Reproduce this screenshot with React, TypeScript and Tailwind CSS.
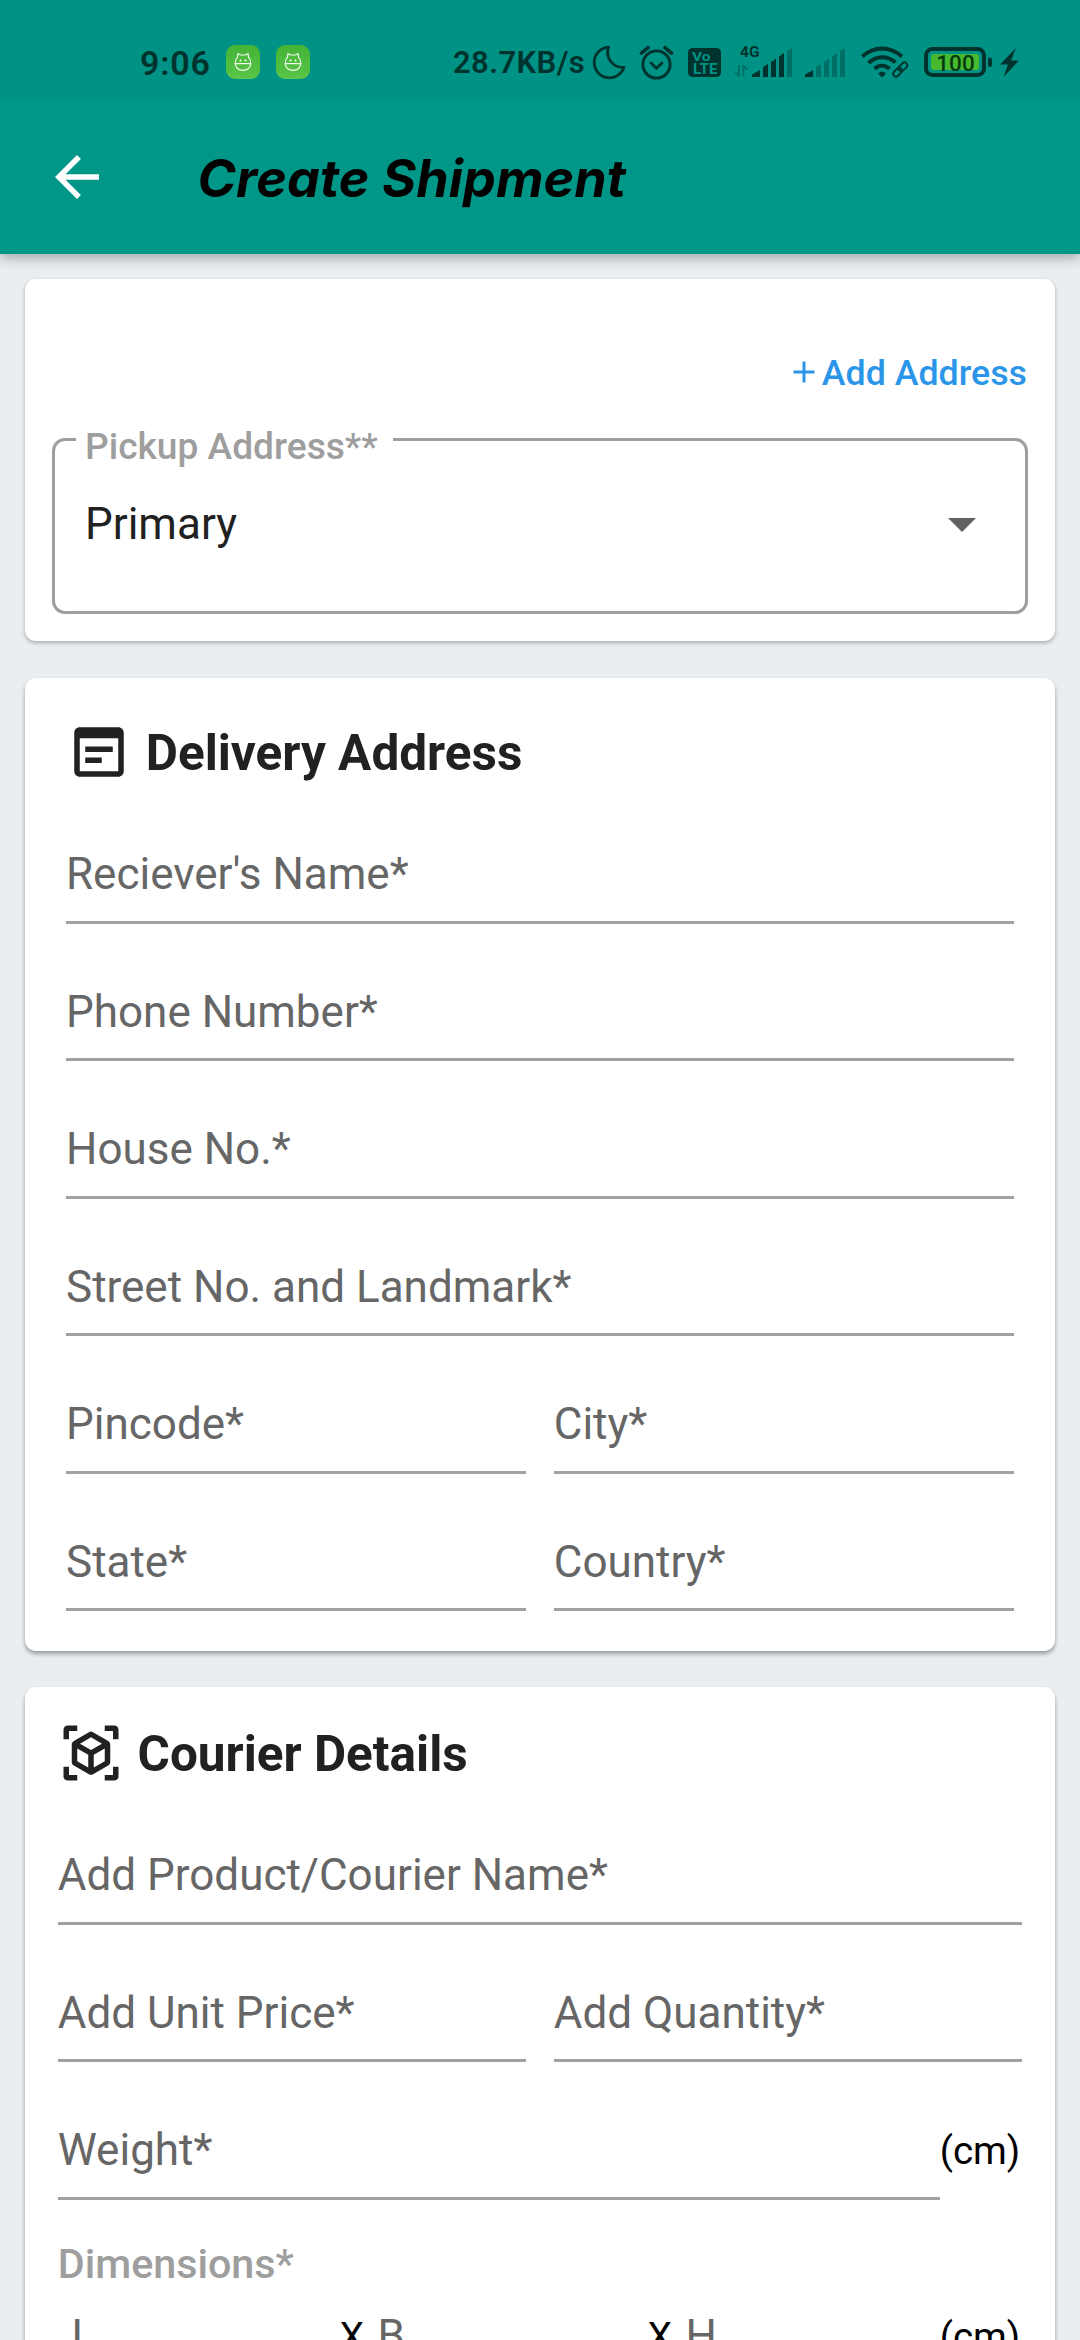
import type { ReactNode } from 'react';

const INK = '#00332d';
const FAINT = '#007066';

function AppBadge() {
  return (
    <div className="flex h-[34px] w-[34px] items-center justify-center rounded-[9px] bg-linear-to-b from-[#43b336] to-[#5ac548]">
      <svg width="18" height="20" viewBox="0 0 18 20" fill="none" stroke="#f1fbef" strokeWidth="1.2">
        <path d="M1.2 11.2C1.2 15.6 4.6 18.4 9 18.4s7.8-2.8 7.8-7.2c0-2.7-.8-4.7-2.3-6L14 1.6 11.6 3H6.4L4 1.6 3.5 5.2c-1.5 1.3-2.3 3.3-2.3 6z" />
        <path d="M1.2 11.7h15.6M5.5 8.6h2M10.5 8.6h2M6.5 7.6v2M11.5 7.6v2" />
      </svg>
    </div>
  );
}

function Moon() {
  return (
    <svg className="ml-2 h-[35px] w-[34px]" viewBox="0 0 34 35" fill="none" stroke={INK} strokeWidth="2.8" strokeLinejoin="round">
      <path d="M16.6 2.2A15.3 15.3 0 1 0 32 22.3 A15 15 0 0 1 16.6 2.2z" />
    </svg>
  );
}

function Alarm() {
  return (
    <svg className="ml-[13px] h-[35px] w-[35px]" viewBox="0 0 35 35" fill="none" stroke={INK} strokeWidth="2.9" strokeLinecap="round">
      <circle cx="17.5" cy="19.5" r="13.6" />
      <path d="M12 18l5.5 5.2L23 18" strokeLinejoin="round" />
      <path d="M2.4 8.2L9 2.6M32.6 8.2L26 2.6" strokeWidth="3.6" />
    </svg>
  );
}

function VoLte() {
  return (
    <svg className="ml-[14px] mt-[1px] h-[29px] w-[33px]" viewBox="0 0 33 29">
      <rect width="33" height="29" rx="4.5" fill={INK} />
      <g fill="#009285" fontFamily="Roboto, sans-serif" fontWeight="700">
        <text x="4" y="13" fontSize="13.5" textLength="18.5" lengthAdjust="spacingAndGlyphs">Vo</text>
        <text x="5" y="25.8" fontSize="14" textLength="24.5" lengthAdjust="spacingAndGlyphs">LTE</text>
      </g>
    </svg>
  );
}

const BAR_PATHS = ['M0 29v-2.5L8 22v7z', 'M11 29V19l5-3v13z', 'M19 29V14l5-3.3V29z', 'M27 29V8.500L32 5v24z', 'M35 29V3l5-3v29z'];

function Signal({ filled }: { filled: number }) {
  return (
    <>
      {BAR_PATHS.map((d, i) => (
        <path key={d} d={d} fill={i < filled ? INK : FAINT} />
      ))}
    </>
  );
}

function MobileSignal() {
  return (
    <svg className="ml-[13px] h-[34px] w-[58px] overflow-visible" viewBox="0 0 58 34">
      <text x="6" y="12.4" fontSize="15.5" fontWeight="700" fill={INK} fontFamily="Roboto, sans-serif" textLength="19.5" lengthAdjust="spacingAndGlyphs">4G</text>
      <path d="M5 20v11.5M5 31.5l-4-4.5M9.5 31.5V20M9.5 20.5l4 4.5" stroke={FAINT} strokeWidth="1.8" fill="none" />
      <g transform="translate(18 3)">
        <Signal filled={4} />
      </g>
    </svg>
  );
}

function SecondSignal() {
  return (
    <svg className="ml-[13px] h-[34px] w-[40px]" viewBox="0 0 40 34">
      <g transform="translate(0 3)">
        <Signal filled={1} />
      </g>
    </svg>
  );
}

function Wifi() {
  return (
    <svg className="ml-[16px] h-[32px] w-[48px]" viewBox="0 0 48 32" fill="none" stroke={INK}>
      <path d="M1.3 10.5C13-.2 29-.2 41 10.5" strokeWidth="4" />
      <path d="M7.5 17C16 9.5 26.5 9.5 34.5 16.5" strokeWidth="4" />
      <path d="M13.5 22.7c4.5-4 10.5-4 15 0" strokeWidth="4" />
      <path d="M17 27.5c2.5-2.3 5.5-2.3 8 0L21 31.5z" fill={INK} stroke="none" />
      <g strokeWidth="1.9" transform="rotate(-45 39.5 23.5)">
        <rect x="30.5" y="20.5" width="10" height="5.6" rx="2.8" />
        <rect x="38" y="20.5" width="10" height="5.6" rx="2.8" />
      </g>
    </svg>
  );
}

function Battery() {
  return (
    <svg className="ml-[15px] h-[30px] w-[68px]" viewBox="0 0 68 30">
      <rect x="2" y="2" width="58" height="26" rx="6.5" fill="none" stroke={INK} strokeWidth="4" />
      <rect x="7" y="7" width="48" height="16" rx="2.5" fill="#46b92e" />
      <rect x="64" y="10.5" width="4" height="9.5" rx="2" fill={INK} />
      <text x="31.5" y="23.5" fontSize="22.5" fontWeight="500" textAnchor="middle" fill="#063a12" fontFamily="Roboto, sans-serif">100</text>
    </svg>
  );
}

function Bolt() {
  return (
    <svg className="ml-2 h-[29px] w-[19px]" viewBox="0 0 19 29">
      <path d="M16 0L0 16.5h8L3.500 29 19 12.5h-8z" fill={INK} />
    </svg>
  );
}

function StatusBar() {
  return (
    <div className="flex h-[100px] items-start bg-[#009285] pt-[45px] text-[#00332d]">
      <div className="flex h-[34px] w-full items-center">
        <div className="ml-[140px] mt-[2px] w-[86px] text-[34px] font-semibold leading-[34px] tracking-[0.8px]">9:06</div>
        <AppBadge />
        <div className="w-4" />
        <AppBadge />
        <div className="ml-[143px] mt-[2px] w-[131px] whitespace-nowrap text-[31px] font-semibold leading-[36px] tracking-[0.4px]">28.7KB/s</div>
        <Moon />
        <Alarm />
        <VoLte />
        <MobileSignal />
        <SecondSignal />
        <Wifi />
        <Battery />
        <Bolt />
      </div>
    </div>
  );
}

function AppBar() {
  return (
    <header className="relative shadow-[0_4px_12px_rgba(0,0,0,0.3)]">
      <StatusBar />
      <div className="flex h-[154px] items-center bg-[#009688] pl-11">
        <svg className="h-[66px] w-[66px]" viewBox="0 0 24 24" fill="#fff">
          <path d="M20 11H7.83l5.59-5.59L12 4l-8 8 8 8 1.41-1.41L7.83 13H20v-2z" />
        </svg>
        <h1 className="ml-[87.5px] mt-[4px] font-['Inter'] text-[52px] font-bold italic leading-[64px] tracking-[0.15px] text-black">Create Shipment</h1>
      </div>
    </header>
  );
}

function Field({ label }: { label: string }) {
  return (
    <label className="flex h-[137.5px] min-w-0 flex-1 flex-col justify-end">
      <span className="h-[66px] whitespace-nowrap text-[44px] leading-[66px] text-[#666]">{label}</span>
      <span className="mt-[13.5px] h-[3px] bg-[#a2a2a2]" />
    </label>
  );
}

function FieldRow({ children }: { children: ReactNode }) {
  return <div className="flex gap-[27.5px]">{children}</div>;
}

function Heading({ icon, children }: { icon: string; children: ReactNode }) {
  return (
    <div className="mb-px flex h-[66px] items-center gap-[13.75px]">
      <svg className="h-[66px] w-[66px]" viewBox="0 0 24 24" fill="#212121">
        <path d={icon} />
      </svg>
      <h2 className="mt-[2px] text-[49.5px] font-bold leading-[66px] text-[#212121]">{children}</h2>
    </div>
  );
}

const DOCUMENT_ICON =
  'M19 3H5c-1.11 0-2 .9-2 2v14c0 1.1.89 2 2 2h14c1.1 0 2-.9 2-2V5c0-1.1-.89-2-2-2zm0 16H5V7h14v12zm-2-7H7v-2h10v2zm-4 4H7v-2h6v2z';
const BOX_ICON =
  'M18.25 7.6l-5.5-3.18c-.46-.27-1.04-.27-1.5 0L5.75 7.6C5.29 7.87 5 8.36 5 8.9v6.35c0 .54.29 1.03.75 1.3l5.5 3.18c.46.27 1.04.27 1.5 0l5.5-3.18c.46-.27.75-.76.75-1.3V8.9c0-.54-.29-1.03-.75-1.3zM7 14.96v-4.62l4 2.32v4.61l-4-2.31zM12 10.93L8 8.61l4-2.31 4 2.31-4 2.32zM13 17.27v-4.61l4-2.32v4.62l-4 2.31zM7 2H3.5C2.67 2 2 2.67 2 3.5V7h2V4h3V2zM17 2h3.5c.83 0 1.5.67 1.5 1.5V7h-2V4h-3V2zM7 22H3.5c-.83 0-1.5-.67-1.5-1.5V17h2v3h3v2zM17 22h3.5c.83 0 1.5-.67 1.5-1.5V17h-2v3h-3v2z';

function PickupCard() {
  return (
    <section className="mt-[25px] h-[362px] rounded-[11px] bg-white px-[27px] pt-[60px] shadow-[0_2px_4px_rgba(0,0,0,0.28)]">
      <div className="flex h-[66px] items-center justify-end text-[#2b95e9]">
        <svg className="mr-[7px] h-[22px] w-[22px]" viewBox="0 0 22 22" stroke="currentColor" strokeWidth="3">
          <path d="M0.5 11h21M11 .5v21" />
        </svg>
        <span className="mr-px mt-[2px] text-[35.75px] font-medium leading-[66px]">Add Address</span>
      </div>
      <div className="relative mt-[33px] flex h-[176px] items-center justify-between rounded-[13px] border-[3px] border-[#9e9e9e] pb-1 pl-[30px] pr-[49px]">
        <span className="absolute -top-[18px] left-[21px] h-[46px] w-[317px] bg-white pl-[9px] text-[37.125px] font-medium leading-[47px] text-[#9e9e9e]">Pickup Address**</span>
        <span className="text-[44px] leading-[66px] text-[#212121]">Primary</span>
        <svg className="mt-[2px] h-[14px] w-7" viewBox="0 0 28 14" fill="#616161">
          <path d="M0 0h28L14 14z" />
        </svg>
      </div>
    </section>
  );
}

function DeliveryCard() {
  return (
    <section className="mt-[37px] h-[973px] rounded-[11px] bg-white px-[41px] pt-[41px] shadow-[0_3px_4px_rgba(0,0,0,0.34)]">
      <Heading icon={DOCUMENT_ICON}>Delivery Address</Heading>
      <Field label="Reciever's Name*" />
      <Field label="Phone Number*" />
      <Field label="House No.*" />
      <Field label="Street No. and Landmark*" />
      <FieldRow>
        <Field label="Pincode*" />
        <Field label="City*" />
      </FieldRow>
      <FieldRow>
        <Field label="State*" />
        <Field label="Country*" />
      </FieldRow>
    </section>
  );
}

function Unit() {
  return <span className="mt-px w-[82.5px] shrink-0 text-[38.5px] leading-[66px] text-black">(cm)</span>;
}

function DimensionInput({ label, className }: { label: string; className: string }) {
  return <span className={'pl-[13.75px] text-[44px] leading-[66px] text-[#666] ' + className}>{label}</span>;
}

function Times() {
  return <span className="mt-[2px] w-[24px] text-[38.5px] leading-[66px] text-black">X</span>;
}

function CourierCard() {
  return (
    <section className="mt-9 h-[900px] rounded-[11px] bg-white px-[32.75px] pt-[33px] shadow-[0_3px_4px_rgba(0,0,0,0.34)]">
      <Heading icon={BOX_ICON}>Courier Details</Heading>
      <Field label="Add Product/Courier Name*" />
      <FieldRow>
        <Field label="Add Unit Price*" />
        <Field label="Add Quantity*" />
      </FieldRow>
      <div className="flex items-end">
        <Field label="Weight*" />
        <div className="mb-[16.5px] flex h-[66px]">
          <Unit />
        </div>
      </div>
      <div className="mt-[34.5px] h-[60px] text-[41.25px] font-medium leading-[60px] text-[#9e9e9e]">Dimensions*</div>
      <div className="mt-[9px] flex h-[66px] items-center">
        <DimensionInput label="L" className="w-[282px]" />
        <Times />
        <DimensionInput label="B" className="w-[284px]" />
        <Times />
        <DimensionInput label="H" className="flex-1" />
        <Unit />
      </div>
    </section>
  );
}

export default function App() {
  return (
    <div className="h-[2340px] w-[1080px] overflow-hidden bg-[#eaeef1] font-['Roboto',sans-serif]">
      <AppBar />
      <main className="px-[25px]">
        <PickupCard />
        <DeliveryCard />
        <CourierCard />
      </main>
    </div>
  );
}
